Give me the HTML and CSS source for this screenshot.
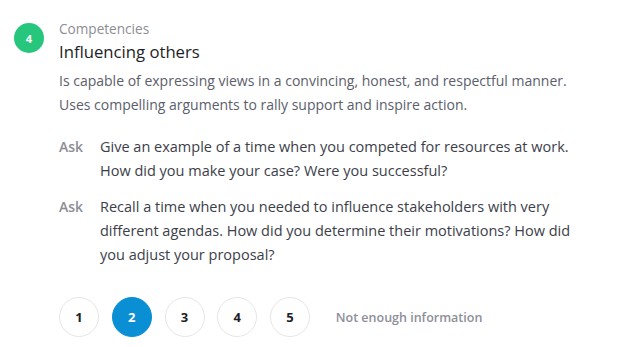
FILE: index.html
```html
<!DOCTYPE html>
<html lang="en">
<head>
  <meta charset="UTF-8" />
  <title>Competencies</title>
  <link rel="stylesheet" href="styles.css">
</head>
<body>
  <div class="competency">
    <div class="step-badge">4</div>
    <div class="competency-body">
      <div class="eyebrow">Competencies</div>
      <h2 class="title">Influencing others</h2>
      <p class="description">Is capable of expressing views in a convincing, honest, and respectful manner. Uses compelling arguments to rally support and inspire action.</p>

      <div class="questions">
        <div class="question">
          <span class="ask">Ask</span>
          <span class="question-text">Give an example of a time when you competed for resources at work. How did you make your case? Were you successful?</span>
        </div>
        <div class="question">
          <span class="ask">Ask</span>
          <span class="question-text">Recall a time when you needed to influence stakeholders with very different agendas. How did you determine their motivations? How did you adjust your proposal?</span>
        </div>
      </div>

      <div class="rating">
        <button class="rating-btn">1</button>
        <button class="rating-btn active">2</button>
        <button class="rating-btn">3</button>
        <button class="rating-btn">4</button>
        <button class="rating-btn">5</button>
        <span class="not-enough">Not enough information</span>
      </div>
    </div>
  </div>
</body>
</html>
```

FILE: styles.css
```css
body {
  margin: 0;
  padding: 0;
  font-family: "Open Sans", Arial, sans-serif;
  background-color: #ffffff;
  color: #5b5e6b;
}
.competency {
  display: flex;
  gap: 15px;
  padding: 20px 14px 0 14px;
}
.step-badge {
  flex: none;
  width: 30px;
  height: 30px;
  margin-top: 3px;
  border-radius: 50%;
  background-color: #26c77d;
  color: white;
  font-size: 11px;
  font-weight: 700;
  display: flex;
  justify-content: center;
  align-items: center;
}
.competency-body {
  width: 540px;
}
.eyebrow {
  font-size: 13.6px;
  line-height: 18px;
  color: #8c8d95;
}
.title {
  margin: 2px 0 5px 0;
  font-size: 16.7px;
  line-height: 24px;
  font-weight: 400;
  color: #1d1e28;
}
.description {
  margin: 0;
  font-size: 14px;
  line-height: 24px;
  color: #5b5e6b;
}
.questions {
  margin-top: 18px;
  display: flex;
  flex-direction: column;
  gap: 12px;
}
.question {
  display: flex;
  font-size: 14px;
  line-height: 24px;
}
.ask {
  flex: none;
  width: 41px;
  color: #8c8d95;
  font-weight: 600;
}
.question-text {
  width: 486px;
  font-size: 14.5px;
  color: #3c3e4a;
}
.rating {
  margin-top: 30px;
  display: flex;
  align-items: center;
  gap: 12.75px;
}
.rating-btn {
  width: 40px;
  height: 40px;
  border-radius: 50%;
  border: 1px solid #e6e6ea;
  background-color: white;
  color: #1d1e28;
  font-family: inherit;
  font-size: 13px;
  font-weight: 700;
  padding: 0;
  cursor: pointer;
}
.rating-btn.active {
  background-color: #0a8fd5;
  border-color: #0a8fd5;
  color: white;
}
.not-enough {
  margin-left: 13px;
  font-size: 12.5px;
  font-weight: 600;
  color: #8e8f98;
}
```
